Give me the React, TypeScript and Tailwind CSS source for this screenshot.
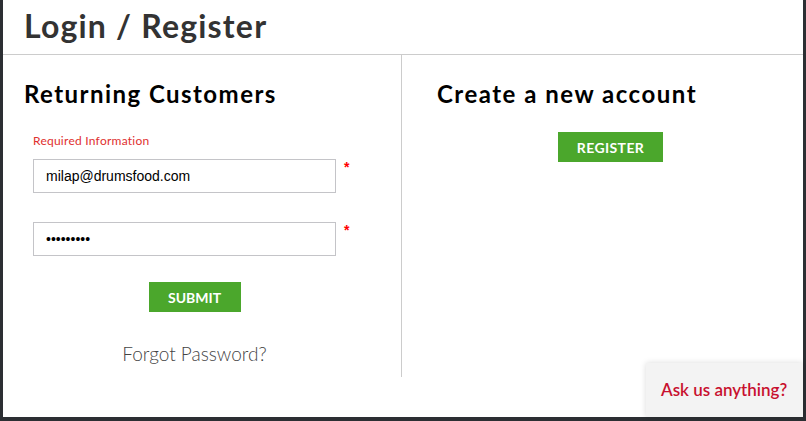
import React from "react";

const heading = "font-['Lato','Open_Sans',sans-serif]";

function Field({ type, value }: { type: string; value: string }) {
  return (
    <div className="flex items-start">
      <input
        type={type}
        defaultValue={value}
        readOnly
        className="w-[303px] h-[34px] border border-[#c4c4c8] bg-white px-[12px] text-[14px] text-black font-['Liberation_Sans',Arial,sans-serif] outline-none"
      />
      <span className="ml-[8px] mt-[1px] text-[14px] leading-none font-bold text-[#f00] font-['Liberation_Sans',Arial,sans-serif]">
        *
      </span>
    </div>
  );
}

export default function App() {
  return (
    <div className="w-[806px] h-[421px] bg-[#2c2f33] overflow-hidden">
      <div className="relative ml-[3px] w-[800px] h-[417px] bg-white">
        {/* Header */}
        <div className="h-[55px] border-b border-[#cccccc] pl-[21px] pt-[6px]">
          <h1 className={`${heading} text-[32px] leading-[40px] font-bold tracking-[1.2px] text-[#333]`}>
            Login / Register
          </h1>
        </div>

        {/* Columns */}
        <div className="flex">
          <div className="w-[399px] h-[322px] border-r border-[#cccccc] pt-[24px]">
            <h2 className={`${heading} pl-[21px] text-[24px] leading-[30px] font-bold tracking-[1.45px] text-black`}>
              Returning Customers
            </h2>
            <div className="ml-[30px] w-[323px] mt-[24px] flex flex-col">
              <p className={`${heading} text-[12px] leading-[16px] tracking-[0.25px] text-[#e0302f]`}>
                Required Information
              </p>
              <div className="mt-[10px] flex flex-col gap-[29px]">
                <Field type="text" value="milap@drumsfood.com" />
                <Field type="password" value="123456789" />
              </div>
              <div className="mt-[26px] flex justify-center">
                <button className={`${heading} h-[30px] w-[92px] bg-[#4ba72c] text-white text-[14px] font-bold`}>
                  SUBMIT
                </button>
              </div>
              <p className={`${heading} mt-[30px] text-center text-[19px] leading-[24px] font-light text-[#444]`}>
                Forgot Password?
              </p>
            </div>
          </div>

          <div className="flex-1 pt-[24px]">
            <h2 className={`${heading} pl-[35px] text-[24px] leading-[30px] font-bold tracking-[1.5px] text-black`}>
              Create a new account
            </h2>
            <button
              className={`${heading} ml-[156px] mt-[23px] h-[30px] w-[105px] bg-[#4ba72c] text-white text-[14px] font-bold tracking-[0.4px]`}
            >
              REGISTER
            </button>
          </div>
        </div>

        {/* Chat widget */}
        <div className="absolute right-0 bottom-0 w-[157px] h-[54px] bg-[#f3f3f3] shadow-[0_0_6px_rgba(0,0,0,0.15)] flex items-center pl-[15px]">
          <span className={`${heading} text-[17px] font-semibold text-[#c8102e]`}>
            Ask us anything?
          </span>
        </div>
      </div>
    </div>
  );
}
